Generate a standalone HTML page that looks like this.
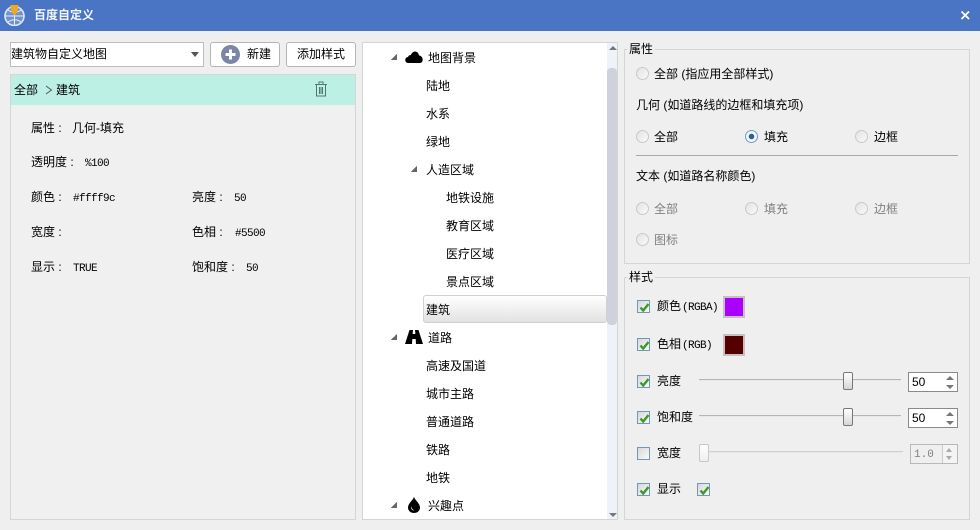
<!DOCTYPE html>
<html lang="zh"><head><meta charset="utf-8"><title>百度自定义</title>
<style>
html,body{margin:0;padding:0}
body{width:980px;height:530px;position:relative;overflow:hidden;background:#efefef;font:12px/16px "Liberation Sans","Noto Sans CJK SC",sans-serif;color:#000}
div,span,svg{position:absolute;box-sizing:border-box}
.t{white-space:nowrap;height:16px}
.m{font-family:"Liberation Mono","Noto Sans CJK SC",monospace;font-size:11px;letter-spacing:-.6px;transform:translateY(2px)}
.g{color:#808080}
.r{width:13px;height:13px;border-radius:50%;border:1px solid #c9c9c9;background:linear-gradient(135deg,#e2e2e2,#fafafa)}
.c{width:13px;height:13px;border:1px solid #7397b8;background:linear-gradient(135deg,#d8d8d8,#fafafa)}
.c svg{left:1px;top:1px}
.c path{stroke:#3c9a28;stroke-width:2.4}
.btn{height:25px;border:1px solid #b5b5b5;border-radius:3px;background:#fff}
.gb{border:1px solid #d5d5d5;left:624px;width:346px}
.lg{background:#efefef;padding:0 2px}
.tri{width:0;height:0;border-left:3px solid transparent;border-right:3px solid transparent}
.arr{width:6px;height:6px;background:linear-gradient(135deg,transparent 50%,#666 50%)}
.sw{left:723px;width:22px;height:22px;border:2px solid #c8c0c0;outline:0}
.track{height:2px;background:#b5b5b5;border-bottom:1px solid #e8e8e8}
.thumb{width:10px;height:18px;border:1px solid #777;border-radius:2px;background:linear-gradient(#fff,#d6d6d6)}
.spin{width:50px;height:20px;border:1px solid #8a8a8a;background:#fff}
</style></head><body>

<!-- title bar -->
<div style="left:0;top:0;width:980px;height:31px;background:#4a74c4"></div>
<svg style="left:4px;top:4px" width="22" height="22" viewBox="0 0 22 22"><circle cx="10.5" cy="12" r="9.500" fill="#6f93cf" stroke="#dfe8f7" stroke-width="1.600"/><path d="M1.500 12H20M10.500 3V21M4 6c4 3 9 3 13 0M4 18c4-3 9-3 13 0" stroke="#e8eef9" stroke-width="1" fill="none"/><path d="M6.500 1h8l-1 7-3 3.500-3-3.500z" fill="#eda824"/></svg>
<span class="t" style="left:34px;top:7px;color:#f2f5fb;font-weight:700">百度自定义</span>
<svg style="left:959px;top:9px" width="12" height="12" viewBox="0 0 12 12"><path d="M2.500 2.500L10 10M10 2.500L2.500 10" stroke="#fff" stroke-width="1.800"/></svg>

<!-- top controls -->
<div style="left:10px;top:42px;width:194px;height:25px;background:#fff;border:1px solid #bdbdbd"></div>
<span class="t" style="left:11px;top:46px">建筑物自定义地图</span>
<div class="tri" style="left:191px;top:52px;border-left-width:4px;border-right-width:4px;border-top:5px solid #555"></div>
<div class="btn" style="left:210px;top:42px;width:70px"></div>
<svg style="left:221px;top:45px" width="19" height="19" viewBox="0 0 19 19"><circle cx="9.500" cy="9.500" r="9.500" fill="#7b86a6"/><path d="M9.500 4.500v10M4.500 9.500h10" stroke="#fff" stroke-width="3"/></svg>
<span class="t" style="left:247px;top:46px">新建</span>
<div class="btn" style="left:286px;top:42px;width:70px"></div>
<span class="t" style="left:297px;top:46px">添加样式</span>

<!-- left panel -->
<div style="left:10px;top:74px;width:346px;height:446px;border:1px solid #d5d5d5;background:#f0f0f0"></div>
<div style="left:11px;top:75px;width:344px;height:30px;background:#bdf0e4"></div>
<span class="t" style="left:14px;top:82px">全部</span>
<svg style="left:44px;top:85px" width="10" height="10" viewBox="0 0 10 10"><path d="M2 1L7.500 5 2 9" stroke="#555" fill="none"/></svg>
<span class="t" style="left:56px;top:82px">建筑</span>
<svg style="left:314px;top:81px" width="14" height="16" viewBox="0 0 14 16"><path d="M1 3.500H13M5 3V1H9V3M2.500 4V15H11.500V4M5.500 6V13M7 6V13M8.500 6V13" stroke="#4d7a70" fill="none"/></svg>
<span class="t" style="left:31px;top:120px">属性 :</span><span class="t" style="left:72px;top:120px">几何-填充</span>
<span class="t" style="left:31px;top:154px">透明度 :</span><span class="t m" style="left:85px;top:154px">%100</span>
<span class="t" style="left:31px;top:189px">颜色 :</span><span class="t m" style="left:73px;top:189px">#ffff9c</span>
<span class="t" style="left:192px;top:189px">亮度 :</span><span class="t m" style="left:234px;top:189px">50</span>
<span class="t" style="left:31px;top:224px">宽度 :</span>
<span class="t" style="left:192px;top:224px">色相 :</span><span class="t m" style="left:235px;top:224px">#5500</span>
<span class="t" style="left:31px;top:259px">显示 :</span><span class="t m" style="left:73px;top:259px">TRUE</span>
<span class="t" style="left:192px;top:259px">饱和度 :</span><span class="t m" style="left:246px;top:259px">50</span>

<!-- tree -->
<div style="left:362px;top:42px;width:256px;height:478px;background:#fff;border:1px solid #d5d5d5"></div>
<div style="left:607px;top:43px;width:10px;height:476px;background:#eef2f9"></div>
<div style="left:607px;top:68px;width:10px;height:257px;background:#cfd2dc;border-radius:4px"></div>
<div class="tri" style="left:609px;top:46px;border-left-width:4px;border-right-width:4px;border-bottom:4px solid #777"></div>
<div class="tri" style="left:609px;top:513px;border-left-width:4px;border-right-width:4px;border-top:4px solid #777"></div>
<div style="left:423px;top:295px;width:184px;height:28px;border:1px solid #d0d0d0;border-radius:3px;background:linear-gradient(#fff,#e2e2e2)"></div>

<div class="arr" style="left:391px;top:54px"></div>
<svg style="left:405px;top:50px" width="18" height="14" viewBox="0 0 18 14"><path d="M3.500 13C1.200 13 .3 11.500.3 10c0-1.700 1.200-2.900 2.800-3C3.500 5.500 4.600 5 5.700 5.200 6.600 3 8.500 1.500 10 1.500c2 0 3.700 1.800 4 3.900C16.300 5.700 17.700 7.800 17.700 9.700c0 1.900-1.200 3.300-3.200 3.300z" fill="#000"/></svg>
<span class="t" style="left:428px;top:50px">地图背景</span>
<span class="t" style="left:426px;top:78px">陆地</span>
<span class="t" style="left:426px;top:106px">水系</span>
<span class="t" style="left:426px;top:134px">绿地</span>
<div class="arr" style="left:411px;top:166px"></div>
<span class="t" style="left:426px;top:162px">人造区域</span>
<span class="t" style="left:446px;top:190px">地铁设施</span>
<span class="t" style="left:446px;top:218px">教育区域</span>
<span class="t" style="left:446px;top:246px">医疗区域</span>
<span class="t" style="left:446px;top:274px">景点区域</span>
<span class="t" style="left:426px;top:302px">建筑</span>
<div class="arr" style="left:391px;top:334px"></div>
<svg style="left:405px;top:330px" width="18" height="14" viewBox="0 0 18 14"><path d="M4.500 0H8L7.600 4H10.400L10 0H13.500L18 14H11L10.700 9H7.300L7 14H0z" fill="#000"/></svg>
<span class="t" style="left:428px;top:330px">道路</span>
<span class="t" style="left:426px;top:358px">高速及国道</span>
<span class="t" style="left:426px;top:386px">城市主路</span>
<span class="t" style="left:426px;top:414px">普通道路</span>
<span class="t" style="left:426px;top:442px">铁路</span>
<span class="t" style="left:426px;top:470px">地铁</span>
<div class="arr" style="left:391px;top:502px"></div>
<svg style="left:408px;top:497px" width="12" height="16" viewBox="0 0 12 16"><path fill-rule="evenodd" d="M6 0C7 3 12 6.500 12 10.500 12 13.800 9.400 16 6 16S0 13.800 0 10.500C0 6.500 5 3 6 0zM3 9.500C2.700 11.800 4.200 13.500 6.500 13.500 5 12.800 3.800 11.500 3 9.500z" fill="#000"/></svg>
<span class="t" style="left:428px;top:498px">兴趣点</span>

<!-- properties group -->
<div class="gb" style="top:49px;height:215px"></div>
<span class="t lg" style="left:627px;top:41px">属性</span>
<div class="r" style="left:636px;top:67px"></div><span class="t" style="left:654px;top:66px">全部 (指应用全部样式)</span>
<span class="t" style="left:636px;top:97px">几何 (如道路线的边框和填充项)</span>
<div class="r" style="left:636px;top:130px"></div><span class="t" style="left:654px;top:129px">全部</span>
<div class="r" style="left:745px;top:130px;border-color:#6f9cc8;background:radial-gradient(circle,#2c5f9e 0 2.500px,#f4f8fc 3px)"></div><span class="t" style="left:764px;top:129px">填充</span>
<div class="r" style="left:855px;top:130px"></div><span class="t" style="left:874px;top:129px">边框</span>
<div style="left:636px;top:155px;width:322px;height:1px;background:#a8a8a8"></div>
<span class="t" style="left:636px;top:168px">文本 (如道路名称颜色)</span>
<div class="r" style="left:636px;top:202px"></div><span class="t g" style="left:654px;top:201px">全部</span>
<div class="r" style="left:745px;top:202px"></div><span class="t g" style="left:764px;top:201px">填充</span>
<div class="r" style="left:855px;top:202px"></div><span class="t g" style="left:874px;top:201px">边框</span>
<div class="r" style="left:636px;top:233px"></div><span class="t g" style="left:654px;top:232px">图标</span>

<!-- style group -->
<div class="gb" style="top:277px;height:243px"></div>
<span class="t lg" style="left:627px;top:269px">样式</span>

<div class="c" style="left:637px;top:300px"><svg width="11" height="11" viewBox="0 0 11 11"><path d="M1.500 5.500L4.200 8.500 9.500 2" fill="none"/></svg></div>
<span class="t" style="left:657px;top:298px">颜色</span><span class="t m" style="left:682px;top:298px">(RGBA)</span>
<div class="sw" style="top:296px;background:#aa00ff"></div>

<div class="c" style="left:637px;top:338px"><svg width="11" height="11" viewBox="0 0 11 11"><path d="M1.500 5.500L4.200 8.500 9.500 2" fill="none"/></svg></div>
<span class="t" style="left:657px;top:336px">色相</span><span class="t m" style="left:682px;top:336px">(RGB)</span>
<div class="sw" style="top:334px;background:#550000"></div>

<div class="c" style="left:637px;top:375px"><svg width="11" height="11" viewBox="0 0 11 11"><path d="M1.500 5.500L4.200 8.500 9.500 2" fill="none"/></svg></div>
<span class="t" style="left:657px;top:373px">亮度</span>
<div class="track" style="left:699px;top:379px;width:202px"></div>
<div class="thumb" style="left:843px;top:372px"></div>
<div class="spin" style="left:908px;top:372px"></div>
<span class="t" style="left:912px;top:374px">50</span>
<div class="tri" style="left:946px;top:376px;border-left-width:4px;border-right-width:4px;border-bottom:4px solid #777"></div>
<div class="tri" style="left:946px;top:385px;border-left-width:4px;border-right-width:4px;border-top:4px solid #777"></div>

<div class="c" style="left:637px;top:411px"><svg width="11" height="11" viewBox="0 0 11 11"><path d="M1.500 5.500L4.200 8.500 9.500 2" fill="none"/></svg></div>
<span class="t" style="left:657px;top:409px">饱和度</span>
<div class="track" style="left:699px;top:415px;width:202px"></div>
<div class="thumb" style="left:843px;top:408px"></div>
<div class="spin" style="left:908px;top:408px"></div>
<span class="t" style="left:912px;top:410px">50</span>
<div class="tri" style="left:946px;top:412px;border-left-width:4px;border-right-width:4px;border-bottom:4px solid #777"></div>
<div class="tri" style="left:946px;top:421px;border-left-width:4px;border-right-width:4px;border-top:4px solid #777"></div>

<div class="c" style="left:637px;top:447px"></div>
<span class="t" style="left:657px;top:445px">宽度</span>
<div class="track" style="left:699px;top:451px;width:204px;background:#cfcfcf"></div>
<div class="thumb" style="left:699px;top:444px;border-color:#c8c8c8;background:linear-gradient(#fff,#eee)"></div>
<div class="spin" style="left:910px;top:444px;width:48px;border-color:#b8b8b8;background:#efefef"></div>
<span class="t m g" style="left:914px;top:445px;letter-spacing:0">1.0</span>
<div style="left:942px;top:445px;width:15px;height:18px;border-left:1px solid #ccc;background:#f4f4f4"></div>
<div class="tri" style="left:946px;top:448px;border-bottom:4px solid #aaa"></div>
<div class="tri" style="left:946px;top:456px;border-top:4px solid #aaa"></div>

<div class="c" style="left:637px;top:483px"><svg width="11" height="11" viewBox="0 0 11 11"><path d="M1.500 5.500L4.200 8.500 9.500 2" fill="none"/></svg></div>
<span class="t" style="left:657px;top:481px">显示</span>
<div class="c" style="left:697px;top:483px"><svg width="11" height="11" viewBox="0 0 11 11"><path d="M1.500 5.500L4.200 8.500 9.500 2" fill="none"/></svg></div>
</body></html>
